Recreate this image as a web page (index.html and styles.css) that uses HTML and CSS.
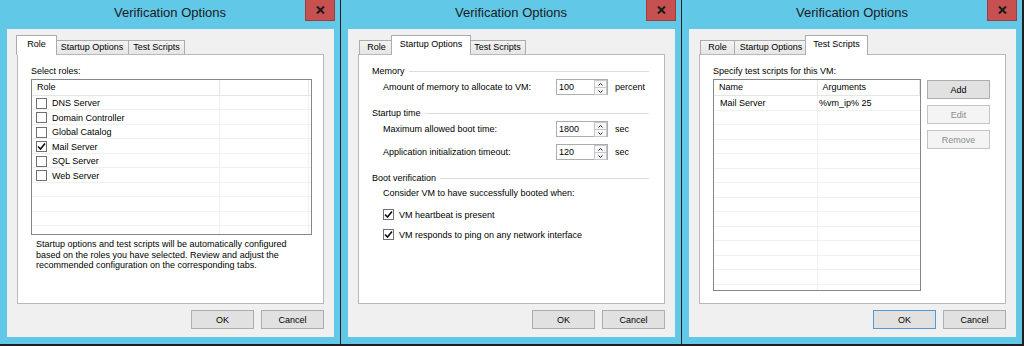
FILE: index.html
```html
<!DOCTYPE html>
<html lang="en">
<head>
    <meta charset="UTF-8">
    <title>Verification Options</title>
    <link rel="stylesheet" href="styles.css">
</head>
<body>
    <div class="screen">
        <!-- Role tab -->
        <div class="window">
            <div class="titlebar">
                <span class="title">Verification Options</span>
                <span class="close"><svg width="9" height="8" viewBox="0 0 9 8"><path d="M1 0.5 L8 7.5 M8 0.5 L1 7.5" stroke="#1a1a1a" stroke-width="2"/></svg></span>
            </div>
            <div class="client">
                <div class="tabs">
                    <div class="tab tab-role selected">Role</div>
                    <div class="tab tab-startup">Startup Options</div>
                    <div class="tab tab-scripts">Test Scripts</div>
                </div>
                <div class="panel">
                    <div class="caption">Select roles:</div>
                    <div class="listview roles">
                        <div class="lv-header">
                            <div class="lv-col">Role</div>
                            <div class="lv-col"></div>
                        </div>
                        <div class="lv-body">
                            <div class="lv-row"><span class="check"></span>DNS Server</div>
                            <div class="lv-row"><span class="check"></span>Domain Controller</div>
                            <div class="lv-row"><span class="check"></span>Global Catalog</div>
                            <div class="lv-row"><span class="check checked"><svg width="9" height="9" viewBox="0 0 9 9"><path d="M1 4.5 L3.5 7 L8 1.5" stroke="#111" stroke-width="1.6" fill="none"/></svg></span>Mail Server</div>
                            <div class="lv-row"><span class="check"></span>SQL Server</div>
                            <div class="lv-row"><span class="check"></span>Web Server</div>
                        </div>
                    </div>
                    <p class="note">Startup options and test scripts will be automatically configured based on the roles you have selected. Review and adjust the recommended configuration on the corresponding tabs.</p>
                </div>
                <div class="actions">
                    <button class="btn">OK</button>
                    <button class="btn">Cancel</button>
                </div>
            </div>
        </div>

        <!-- Startup Options tab -->
        <div class="window">
            <div class="titlebar">
                <span class="title">Verification Options</span>
                <span class="close"><svg width="9" height="8" viewBox="0 0 9 8"><path d="M1 0.5 L8 7.5 M8 0.5 L1 7.5" stroke="#1a1a1a" stroke-width="2"/></svg></span>
            </div>
            <div class="client">
                <div class="tabs">
                    <div class="tab tab-role">Role</div>
                    <div class="tab tab-startup selected">Startup Options</div>
                    <div class="tab tab-scripts">Test Scripts</div>
                </div>
                <div class="panel">
                    <div class="group-head">Memory</div>
                    <div class="field">
                        <span class="field-label">Amount of memory to allocate to VM:</span>
                        <span class="spin">
                            <span class="spin-value">100</span>
                            <span class="spin-btns">
                                <span class="spin-btn"><svg width="5" height="3" viewBox="0 0 5 3"><path d="M0.5 2.5 L2.5 0.5 L4.5 2.5" stroke="#222" fill="none"/></svg></span>
                                <span class="spin-btn"><svg width="5" height="3" viewBox="0 0 5 3"><path d="M0.5 0.5 L2.5 2.5 L4.5 0.5" stroke="#222" fill="none"/></svg></span>
                            </span>
                        </span>
                        <span class="unit">percent</span>
                    </div>

                    <div class="group-head spaced">Startup time</div>
                    <div class="field">
                        <span class="field-label">Maximum allowed boot time:</span>
                        <span class="spin">
                            <span class="spin-value">1800</span>
                            <span class="spin-btns">
                                <span class="spin-btn"><svg width="5" height="3" viewBox="0 0 5 3"><path d="M0.5 2.5 L2.5 0.5 L4.5 2.5" stroke="#222" fill="none"/></svg></span>
                                <span class="spin-btn"><svg width="5" height="3" viewBox="0 0 5 3"><path d="M0.5 0.5 L2.5 2.5 L4.5 0.5" stroke="#222" fill="none"/></svg></span>
                            </span>
                        </span>
                        <span class="unit">sec</span>
                    </div>
                    <div class="field next">
                        <span class="field-label">Application initialization timeout:</span>
                        <span class="spin">
                            <span class="spin-value">120</span>
                            <span class="spin-btns">
                                <span class="spin-btn"><svg width="5" height="3" viewBox="0 0 5 3"><path d="M0.5 2.5 L2.5 0.5 L4.5 2.5" stroke="#222" fill="none"/></svg></span>
                                <span class="spin-btn"><svg width="5" height="3" viewBox="0 0 5 3"><path d="M0.5 0.5 L2.5 2.5 L4.5 0.5" stroke="#222" fill="none"/></svg></span>
                            </span>
                        </span>
                        <span class="unit">sec</span>
                    </div>

                    <div class="group-head spaced">Boot verification</div>
                    <div class="hint">Consider VM to have successfully booted when:</div>
                    <label class="option first"><span class="check checked"><svg width="9" height="9" viewBox="0 0 9 9"><path d="M1 4.5 L3.5 7 L8 1.5" stroke="#111" stroke-width="1.6" fill="none"/></svg></span>VM heartbeat is present</label>
                    <label class="option"><span class="check checked"><svg width="9" height="9" viewBox="0 0 9 9"><path d="M1 4.5 L3.5 7 L8 1.5" stroke="#111" stroke-width="1.6" fill="none"/></svg></span>VM responds to ping on any network interface</label>
                </div>
                <div class="actions">
                    <button class="btn">OK</button>
                    <button class="btn">Cancel</button>
                </div>
            </div>
        </div>

        <!-- Test Scripts tab -->
        <div class="window">
            <div class="titlebar">
                <span class="title">Verification Options</span>
                <span class="close"><svg width="9" height="8" viewBox="0 0 9 8"><path d="M1 0.5 L8 7.5 M8 0.5 L1 7.5" stroke="#1a1a1a" stroke-width="2"/></svg></span>
            </div>
            <div class="client">
                <div class="tabs">
                    <div class="tab tab-role">Role</div>
                    <div class="tab tab-startup">Startup Options</div>
                    <div class="tab tab-scripts selected">Test Scripts</div>
                </div>
                <div class="panel">
                    <div class="caption">Specify test scripts for this VM:</div>
                    <div class="scripts">
                        <div class="listview scripts-list">
                            <div class="lv-header">
                                <div class="lv-col">Name</div>
                                <div class="lv-col">Arguments</div>
                            </div>
                            <div class="lv-body">
                                <div class="lv-row"><span class="lv-cell">Mail Server</span><span class="lv-cell">%vm_ip% 25</span></div>
                            </div>
                        </div>
                        <div class="side-buttons">
                            <button class="btn">Add</button>
                            <button class="btn" disabled>Edit</button>
                            <button class="btn" disabled>Remove</button>
                        </div>
                    </div>
                </div>
                <div class="actions">
                    <button class="btn default">OK</button>
                    <button class="btn">Cancel</button>
                </div>
            </div>
        </div>
    </div>
</body>
</html>
```

FILE: styles.css
```css
body {
    margin: 0;
    background-color: #1f1f1f;
    font-family: "Liberation Sans", Arial, sans-serif;
    font-size: 9px;
    color: #000;
}
.screen {
    display: flex;
    gap: 1px;
    width: 1024px;
    height: 346px;
}
.window {
    width: 340px;
    height: 344px;
    background-color: #62c8e8;
    display: flex;
    flex-direction: column;
}
.titlebar {
    height: 29px;
    display: grid;
    grid-template-columns: 1fr auto 1fr;
    align-items: start;
}
.title {
    grid-column: 2;
    font-size: 13px;
    line-height: 26px;
    color: #1a1a1a;
}
.close {
    grid-column: 3;
    justify-self: end;
    width: 30px;
    height: 21px;
    margin-right: 5px;
    box-sizing: border-box;
    background-color: #c75050;
    border: 1px solid #a03c3c;
    border-top: none;
    display: flex;
    align-items: center;
    justify-content: center;
}
.client {
    flex: 1;
    margin: 0 6px 7px 7px;
    background-color: #f0f0f0;
    padding: 7px 10px 0 10px;
    display: flex;
    flex-direction: column;
}

/* tabs */
.tabs {
    display: flex;
    align-items: flex-end;
    height: 18px;
    padding-left: 2px;
}
.tab {
    height: 14px;
    box-sizing: border-box;
    border: 1px solid #acacac;
    border-bottom: none;
    background: linear-gradient(#f3f3f3, #e6e6e6);
    line-height: 13px;
    text-align: center;
    margin-left: -1px;
}
.tab-role { width: 35px; }
.tab-startup { width: 74px; }
.tab-scripts { width: 57px; }
.tab.selected {
    position: relative;
    z-index: 1;
    height: 19px;
    margin: 0 -2px -1px -3px;
    padding: 0 2px;
    box-sizing: content-box;
    background: #fff;
    line-height: 17px;
}
.tab.selected + .tab { margin-left: 0; }
.panel {
    height: 250px;
    box-sizing: border-box;
    background-color: #fff;
    border: 1px solid #b9b9b9;
    padding: 11px 15px 0 13px;
}
.caption {
    line-height: 11px;
    margin-bottom: 2px;
}

/* list views */
.listview {
    box-sizing: border-box;
    border: 1px solid #828790;
    background-color: #fff;
    overflow: hidden;
}
.lv-header {
    display: flex;
    height: 16px;
    box-sizing: border-box;
    border-bottom: 1px solid #e5e5e5;
    line-height: 15px;
}
.lv-col {
    box-sizing: border-box;
    border-right: 1px solid #e5e5e5;
    padding-left: 5px;
}
.lv-body {
    height: 100%;
    background-image:
        repeating-linear-gradient(to bottom, transparent 0, transparent 13.5px, #f0f0f0 13.5px, #f0f0f0 14.5px),
        var(--col-lines);
}
.lv-row {
    display: flex;
    align-items: center;
    height: 14.5px;
    line-height: 14px;
}
.roles {
    width: 281px;
    height: 156px;
    --col-lines: linear-gradient(to right, transparent 187px, #f0f0f0 187px, #f0f0f0 188px, transparent 188px, transparent 276px, #f0f0f0 276px, #f0f0f0 277px, transparent 277px);
}
.roles .lv-col:first-child { width: 188px; }
.roles .lv-col:last-child { width: 89px; }
.roles .lv-row { padding-left: 4px; }
.check {
    width: 11px;
    height: 11px;
    box-sizing: border-box;
    border: 1px solid #707070;
    background-color: #fff;
    margin-right: 5px;
    display: inline-flex;
    align-items: center;
    justify-content: center;
    flex-shrink: 0;
}
.note {
    margin: 4px 0 0 5px;
    width: 262px;
    line-height: 10.5px;
}

/* startup options */
.group-head {
    display: flex;
    align-items: center;
    gap: 4px;
    line-height: 11px;
}
.group-head::after {
    content: "";
    flex: 1;
    height: 1px;
    background-color: #dcdcdc;
}
.group-head.spaced { margin-top: 13px; }
.field {
    display: flex;
    align-items: center;
    margin-top: 2px;
    padding-left: 11px;
}
.field.next { margin-top: 7px; }
.field-label { width: 173px; }
.spin {
    width: 52px;
    height: 16px;
    box-sizing: border-box;
    border: 1px solid #abadb3;
    background-color: #fff;
    display: flex;
}
.spin-value {
    flex: 1;
    padding-left: 2px;
    line-height: 14px;
}
.spin-btns {
    width: 13px;
    display: flex;
    flex-direction: column;
}
.spin-btn {
    flex: 1;
    border: 1px solid #c8c8c8;
    margin: 0 0 -1px 0;
    background-color: #f7f7f7;
    display: flex;
    align-items: center;
    justify-content: center;
}
.unit { margin-left: 7px; }
.hint {
    line-height: 11px;
    margin-top: 4px;
    padding-left: 11px;
}
.option {
    display: flex;
    align-items: center;
    height: 11px;
    margin-top: 9px;
    padding-left: 11px;
}
.option.first { margin-top: 10px; }

/* test scripts */
.scripts {
    display: flex;
    gap: 6px;
}
.scripts-list {
    width: 212px;
    height: 212px;
    --col-lines: linear-gradient(to right, transparent 103px, #f0f0f0 103px, #f0f0f0 104px, transparent 104px, transparent 206px, #f0f0f0 206px, #f0f0f0 207px, transparent 207px);
}
.scripts-list .lv-col:first-child { width: 104px; }
.scripts-list .lv-col:last-child { width: 103px; }
.lv-cell { box-sizing: border-box; }
.lv-cell:first-child { width: 104px; padding-left: 6px; }
.lv-cell:last-child { padding-left: 1px; }
.side-buttons {
    display: flex;
    flex-direction: column;
    gap: 6px;
    padding-top: 1px;
}

/* buttons */
.btn {
    width: 63px;
    height: 19px;
    box-sizing: border-box;
    border: 1px solid #adadad;
    background-color: #e1e1e1;
    font-family: inherit;
    font-size: 9px;
    color: #000;
    padding: 0;
}
.btn:disabled {
    background-color: #f4f4f4;
    border-color: #c4c4c4;
    color: #8d8d8d;
}
.btn.default { border-color: #4f9ad8; }
.actions {
    display: flex;
    justify-content: flex-end;
    gap: 7px;
    margin-top: 6px;
}
```
